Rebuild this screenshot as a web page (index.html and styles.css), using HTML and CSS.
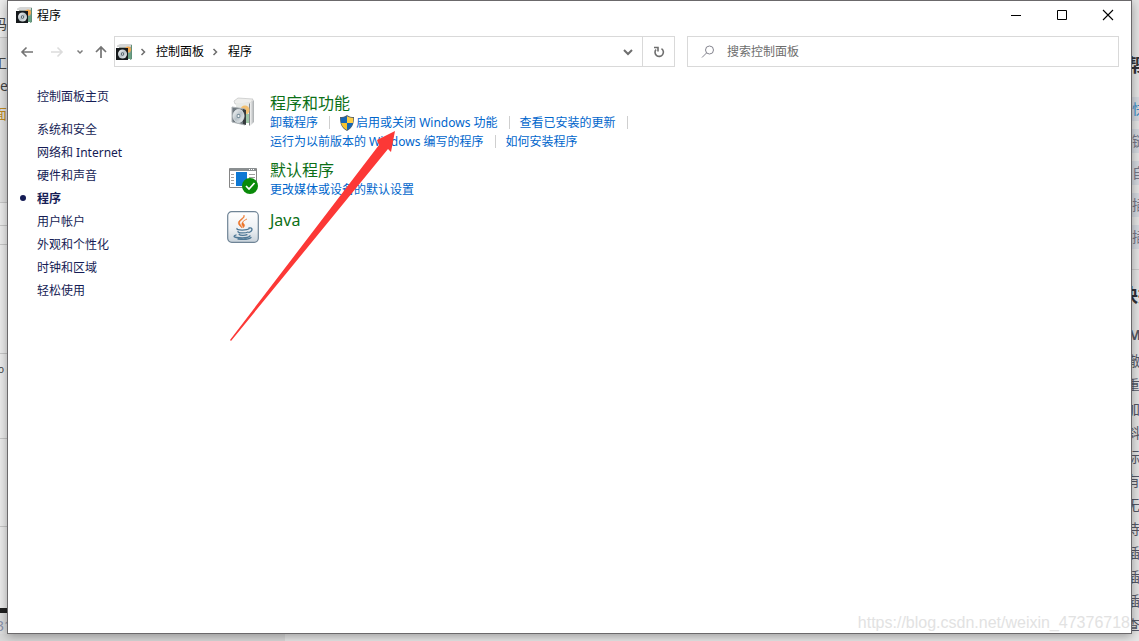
FILE: index.html
```html
<!DOCTYPE html>
<html lang="zh-CN">
<head>
<meta charset="utf-8">
<title>程序</title>
<link rel="stylesheet" href="styles.css">
</head>
<body>
<svg class="defs" width="0" height="0" aria-hidden="true">
  <defs>
    <linearGradient id="metal" x1="0" y1="0" x2="1" y2="0"><stop offset="0" stop-color="#f4f4f4"/><stop offset="1" stop-color="#a8acae"/></linearGradient>
    <linearGradient id="disc" x1="0" y1="0" x2="1" y2="1"><stop offset="0" stop-color="#fafafa"/><stop offset=".5" stop-color="#b8c2c8"/><stop offset="1" stop-color="#f0f2f2"/></linearGradient>
    <linearGradient id="tile" x1="0" y1="0" x2="0" y2="1"><stop offset="0" stop-color="#ffffff"/><stop offset=".55" stop-color="#eef1f4"/><stop offset="1" stop-color="#c8d2da"/></linearGradient>
    <symbol id="programs" viewBox="0 0 16 16">
      <path d="M1 1.500 4 0h12l-1 3H1z" fill="#d5d6d6"/>
      <path d="M3 3h12v12H5z" fill="#9fa7a0"/>
      <path d="M15 1h1v14l-2 1z" fill="#5f8f78"/>
      <circle cx="12" cy="5.500" r="3" fill="#f4a950"/>
      <path d="M12 9h3v6h-3z" fill="#6ba184"/>
      <path d="M0 4h12v12H0z" fill="#15191b"/>
      <circle cx="6.500" cy="10" r="4.500" fill="url(#disc)"/>
      <circle cx="6.500" cy="10" r="1.700" fill="#56656d"/><circle cx="6.500" cy="10" r=".7" fill="#fff"/>
    </symbol>
  </defs>
</svg>
<div class="desktop">
  <div class="edge edge-left" aria-hidden="true">
    <p class="l1">码</p><p class="l2">工人</p><p class="l3">e</p><p class="l4">面一</p><p class="l5"></p><p class="l6"></p><p class="l7"></p><p class="l8">o c</p><p class="l9"></p><p class="l10"></p><p class="l11">31</p>
  </div>
  <main class="window">
    <header class="titlebar">
      <svg class="app-icon"><use href="#programs"/></svg>
      <h1>程序</h1>
      <button class="caption" aria-label="最小化"><svg width="12" height="12"><path d="M1 6.500h10" stroke="#000"/></svg></button>
      <button class="caption" aria-label="最大化"><svg width="12" height="12"><path d="M1.500 1.500h9v9h-9z" fill="none" stroke="#000"/></svg></button>
      <button class="caption" aria-label="关闭"><svg width="12" height="12"><path d="m1 1 10 10M11 1 1 11" stroke="#000" stroke-width="1.100"/></svg></button>
    </header>
    <nav class="toolbar">
      <div class="history">
        <button aria-label="后退"><svg width="14" height="14" fill="none" stroke="#747474" stroke-width="1.600"><path d="M13 7H2M6.500 2.500 2 7l4.500 4.500"/></svg></button>
        <button aria-label="前进" disabled><svg width="14" height="14" fill="none" stroke="#dcdcdc" stroke-width="1.600"><path d="M1 7h11M7.500 2.500 12 7l-4.500 4.500"/></svg></button>
        <button class="recent" aria-label="最近"><svg width="8" height="8" fill="none" stroke="#7c7c7c" stroke-width="1.500"><path d="m1.500 2.500 2.500 2.500 2.500-2.500"/></svg></button>
        <button aria-label="上移"><svg width="14" height="14" fill="none" stroke="#747474" stroke-width="1.700"><path d="M7 13V2M2 7l5-5 5 5"/></svg></button>
      </div>
      <div class="address">
        <svg class="app-icon"><use href="#programs"/></svg>
        <svg class="crumb-arrow" viewBox="0 0 8 8"><path d="m2.500 1 3 3-3 3"/></svg>
        <a href="#panel">控制面板</a>
        <svg class="crumb-arrow" viewBox="0 0 8 8"><path d="m2.500 1 3 3-3 3"/></svg>
        <a href="#programs-page">程序</a>
        <button class="drop" aria-label="以前的位置"><svg width="10" height="10" fill="none" stroke="#6e6e6e" stroke-width="2"><path d="m1 3 4 4 4-4"/></svg></button>
        <button class="refresh" aria-label="刷新"><svg width="12" height="12" fill="none" stroke="#6e6e6e" stroke-width="1.600"><path d="M8.500 2.700A4.200 4.200 0 1 1 3 3.500"/><path d="M1 1.500h4v4"/></svg></button>
      </div>
      <label class="search">
        <svg width="14" height="14" fill="none" stroke="#85858f"><circle cx="8.500" cy="5" r="4"/><path d="M5.600 7.900 1 12.500"/></svg>
        <input type="search" placeholder="搜索控制面板" aria-label="搜索控制面板">
      </label>
    </nav>
    <div class="content">
      <aside class="sidebar">
        <a class="home" href="#home">控制面板主页</a>
        <a href="#system">系统和安全</a>
        <a href="#network">网络和 Internet</a>
        <a href="#hardware">硬件和声音</a>
        <a class="current" href="#programs-page">程序</a>
        <a href="#users">用户帐户</a>
        <a href="#appearance">外观和个性化</a>
        <a href="#clock">时钟和区域</a>
        <a href="#ease">轻松使用</a>
      </aside>
      <section class="categories">
        <article class="category">
          <svg class="category-icon" viewBox="0 0 32 32">
            <path d="m7 4 4-3 15 1-2 4-16 1z" fill="#eeeeec" stroke="#b9bbba" stroke-width=".6"/>
            <path d="M9 6h14v20H9z" fill="#e7e9e6"/>
            <path d="m23 6 4-3v22l-4 4z" fill="url(#metal)"/>
            <path d="m22 7 1-1v23l-1-1z" fill="#85888a"/>
            <circle cx="18" cy="13" r="4.500" fill="#f3bf70"/>
            <path d="M19 17h3v9h-3z" fill="#9dc4a5"/>
            <path d="m5 10 13 2v16L5 25z" fill="#70797f" stroke="#aeb4b7"/>
            <path d="m16 12 3 1v15l-3-1z" fill="#363b3e"/>
            <ellipse cx="11.500" cy="19" rx="5.500" ry="6.500" fill="url(#disc)" stroke="#dce3e6"/>
            <ellipse cx="11.500" cy="19" rx="2" ry="2.300" fill="#7d929e"/><circle cx="11.500" cy="19" r="1" fill="#fff"/>
          </svg>
          <div>
            <h2><a href="#features">程序和功能</a></h2>
            <p class="links"><a href="#uninstall">卸载程序</a><i class="sep"></i><a class="shielded" href="#windows-features"><svg class="shield" viewBox="0 0 16 16"><path d="M8 0c2 1.700 4.500 2 7 2 0 7-1.500 11-7 14C2.500 13 1 9 1 2c2.500 0 5-.3 7-2z" fill="#51606c"/><path d="M8 1.200V8H2.100C1.900 6.500 1.800 4.800 1.800 2.900c2.200 0 4.200-.4 6.200-1.700z" fill="#1767b5"/><path d="M8 1.200c2 1.300 4 1.700 6.200 1.700 0 1.900-.1 3.600-.3 5.100H8z" fill="#ffce45"/><path d="M2.100 8H8v7C4.300 13 2.700 10.500 2.100 8z" fill="#f9c52f"/><path d="M8 8h5.900c-.6 2.500-2.200 5-5.900 7z" fill="#1767b5"/></svg>启用或关闭 Windows 功能</a><i class="sep"></i><a href="#updates">查看已安装的更新</a><i class="sep"></i></p>
            <p class="links"><a href="#compat">运行为以前版本的 Windows 编写的程序</a><i class="sep"></i><a href="#install">如何安装程序</a></p>
          </div>
        </article>
        <article class="category">
          <svg class="category-icon" viewBox="0 0 32 32">
            <path d="M2.500 4.500h27v19h-27z" fill="#fff" stroke="#858585"/><path d="M3 4h26v3H3z" fill="#8a8f91"/><path d="M22 5.500h1m1 0h1m1 0h1" stroke="#fff"/>
            <path d="M4 10.500h3m-3 3h3m-3 3h3m-3 3h3M22 10.500h6m-6 3h6" stroke="#a0a0a0"/>
            <path d="M9 8h11v14H9z" fill="#0e78d4"/>
            <circle cx="23" cy="22" r="8" fill="#0a8a0a"/><path d="m19 22 3 3 5.500-6" fill="none" stroke="#fff" stroke-width="1.700"/>
          </svg>
          <div>
            <h2><a href="#defaults">默认程序</a></h2>
            <p class="links"><a href="#media">更改媒体或设备的默认设置</a></p>
          </div>
        </article>
        <article class="category java">
          <svg class="category-icon" viewBox="0 0 32 32">
            <rect x=".7" y=".7" width="30.600" height="30.600" rx="4" fill="url(#tile)" stroke="#6f8496" stroke-width="1.200"/>
            <path d="M17 4c2 4-6 5-4 9 .5 1 2 2 2 4-2-2-5-4-3-7 2-2.500 5-3 5-6zM20 8c-4 2-5 3-3 5 1.500 2-.5 3-1 4 .5-2-2-3-1-5 .8-2 3-3 5-4z" fill="#ec7429" stroke="#ec7429" stroke-width=".5"/>
            <g fill="none" stroke="#4e7896" stroke-width="1.300" stroke-linecap="round"><path d="M10 17.500c-1 2 10 2 12 .3M11 20.500c0 2 8 1.700 10 .5M12 23.200c1 1.700 6 1.500 8 .5M22 17c4-1 4 3 0 4.500M9 24c-8 3 12 4 14 .8M11 28c5 .6 11 .3 13-1.500"/></g>
          </svg>
          <h2><a href="#java">Java</a></h2>
        </article>
      </section>
    </div>
    <svg class="arrow" viewBox="0 0 170 214" aria-hidden="true"><path d="m2 211 149-195-2-5 18-9-4 21-3-3L3 212z" fill="#fc3836"/></svg>
    <span class="watermark">https://blog.csdn.net/weixin_47376718</span>
  </main>
  <div class="edge edge-right" aria-hidden="true">
    <h3 class="help">帮助</h3>
    <p class="tip blue">快捷</p><p class="tip">链接</p><p class="tip">自定</p><p class="tip">插入</p><p class="tip">插入</p>
    <h3 class="keys">快捷</h3><h4>Markdown</h4>
    <div class="list"><p>撤销</p><p>重做</p><p>加粗</p><p>斜体</p><p>标题</p><p>有序</p><p>无序</p><p>待办</p><p>插入</p><p>插入</p><p>插入</p><p>查找</p></div>
  </div>
  <div class="edge-bottom"></div>
</div>
</body>
</html>
```
FILE: styles.css
```css
* { box-sizing: border-box; }
body {
  margin: 0;
  font: 12px/19px "Noto Sans", "Noto Sans CJK SC", sans-serif;
  color: #000;
}
h1, h2, h3, h4, p { margin: 0; font-weight: 400; }
a { color: inherit; text-decoration: none; }
button { padding: 0; border: 0; background: none; display: grid; place-items: center; }
svg { display: block; flex: none; }
.defs { position: absolute; }

.desktop {
  display: grid;
  grid-template: minmax(0, 1fr) 7px / 7px minmax(0, 1fr) 7px;
  height: 100vh;
  overflow: hidden;
  background: #e4e4e4;
}
.window {
  position: relative;
  z-index: 1;
  display: flex;
  flex-direction: column;
  border: 1px solid #6b696b;
  background: #fff;
  box-shadow: 0 2px 10px rgba(0, 0, 0, .35);
}

.titlebar { display: flex; align-items: center; height: 28px; padding-left: 8px; }
.titlebar h1 { flex: 1; margin-left: 5px; font-size: 12px; }
.app-icon { width: 16px; height: 16px; }
.caption { width: 46px; height: 28px; }

.toolbar { display: flex; height: 31px; margin-top: 7px; padding-right: 12px; }
.history { display: flex; align-items: center; gap: 16px; width: 106px; padding-left: 12px; }
.history .recent { margin: 0 -6px 0 -4px; }
.address { display: flex; align-items: center; flex: 558 1 0; border: 1px solid #d9d9d9; padding-left: 1px; }
.crumb-arrow { width: 8px; height: 8px; margin: 0 9px 0 7px; fill: none; stroke: #6e6e6e; stroke-width: 1.5; }
.address .drop { width: 28px; height: 29px; margin-left: auto; }
.address .refresh { width: 32px; height: 29px; border-left: 1px solid #d9d9d9; }
.search { display: flex; align-items: center; flex: 417 1 0; gap: 12px; margin-left: 12px; padding-left: 13px; border: 1px solid #d9d9d9; }
.search input { flex: 1; min-width: 0; padding: 0; border: 0; outline: 0; font: inherit; background: none; }
.search input::placeholder { color: #6d6d6d; opacity: 1; }

.content { display: grid; grid-template-columns: 219px minmax(0, 1fr); flex: 1; padding-top: 18px; }
.sidebar { display: flex; flex-direction: column; align-items: flex-start; padding-left: 29px; line-height: 23px; color: #151c55; }
.sidebar .home { margin-bottom: 10px; }
.sidebar .current { font-weight: 700; }
.sidebar .current::before {
  content: "";
  float: left;
  width: 6px;
  height: 6px;
  margin: 8px 0 0 -17px;
  border-radius: 50%;
  background: #151c55;
}
.categories { display: flex; flex-direction: column; gap: 10px; padding-top: 9px; }
.category { display: flex; gap: 11px; }
.category-icon { width: 32px; height: 32px; margin-top: 3px; }
.java { padding-top: 2px; }
.java .category-icon { margin-top: 0; }
.category h2 { font-size: 16px; line-height: 19px; color: #0c7017; }
.links { display: flex; align-items: center; height: 19px; color: #0066cc; white-space: nowrap; }
.sep { width: 1px; height: 13px; margin: 0 10px 0 11px; background: #cfcfcf; }
.shielded { display: flex; align-items: center; gap: 1px; }
.shield { width: 16px; height: 16px; margin-left: -1px; }

.arrow { position: absolute; left: 220px; top: 128px; width: 170px; height: 214px; pointer-events: none; }
.watermark {
  position: absolute;
  right: 1px;
  bottom: 1px;
  font: 16px/18px "Liberation Sans", Arial, sans-serif;
  color: #e2e2e2;
}

.edge { overflow: hidden; white-space: nowrap; font-size: 14px; }
.edge-left { color: #444; background: #ededed; }
.edge-left p { border-bottom: 1px solid #c8c8c8; text-indent: -7px; }
.edge-left .l1 { height: 38px; padding-top: 14px; }
.edge-left .l2 { height: 38px; padding-top: 15px; border: 0; background: #e2e2e2; }
.edge-left .l3 { height: 24px; border: 0; text-indent: 0; background: #e2e2e2; }
.edge-left .l4 { height: 103px; padding-top: 4px; color: #c08a20; background: #e2e2e2; }
.edge-left .l5 { height: 23px; }
.edge-left .l6 { height: 19px; }
.edge-left .l7 { height: 109px; }
.edge-left .l8 { height: 85px; padding-top: 6px; font-size: 10px; text-indent: -2px; }
.edge-left .l9 { height: 88px; }
.edge-left .l10 { height: 86px; border-bottom: 5px solid #202020; }
.edge-left .l11 { height: 30px; padding-top: 3px; border: 0; text-indent: -4px; color: #8c93ac; background: #dedede; }
.edge-right { color: #555866; text-indent: -6px; background: #e5e5e5; }
.edge-right h3 { font-size: 18px; font-weight: 700; color: #303036; }
.edge-right .help { height: 97px; padding-top: 56px; }
.edge-right .tip { height: 24px; margin-bottom: 8px; line-height: 24px; background: #d4d8df; color: #777888; text-indent: 0; }
.edge-right .blue { color: #3489c5; }
.edge-right .keys { height: 56px; margin-top: 20px; padding-top: 16px; border-top: 1px solid #ccc; text-indent: -12px; }
.edge-right h4 { height: 24px; font-size: 14px; font-weight: 700; text-indent: -4px; }
.edge-right .list { line-height: 24px; }
.edge-bottom { grid-column: 1 / -1; background: linear-gradient(90deg, #d9d9d9 285px, #e7e7e7 285px); }
```
